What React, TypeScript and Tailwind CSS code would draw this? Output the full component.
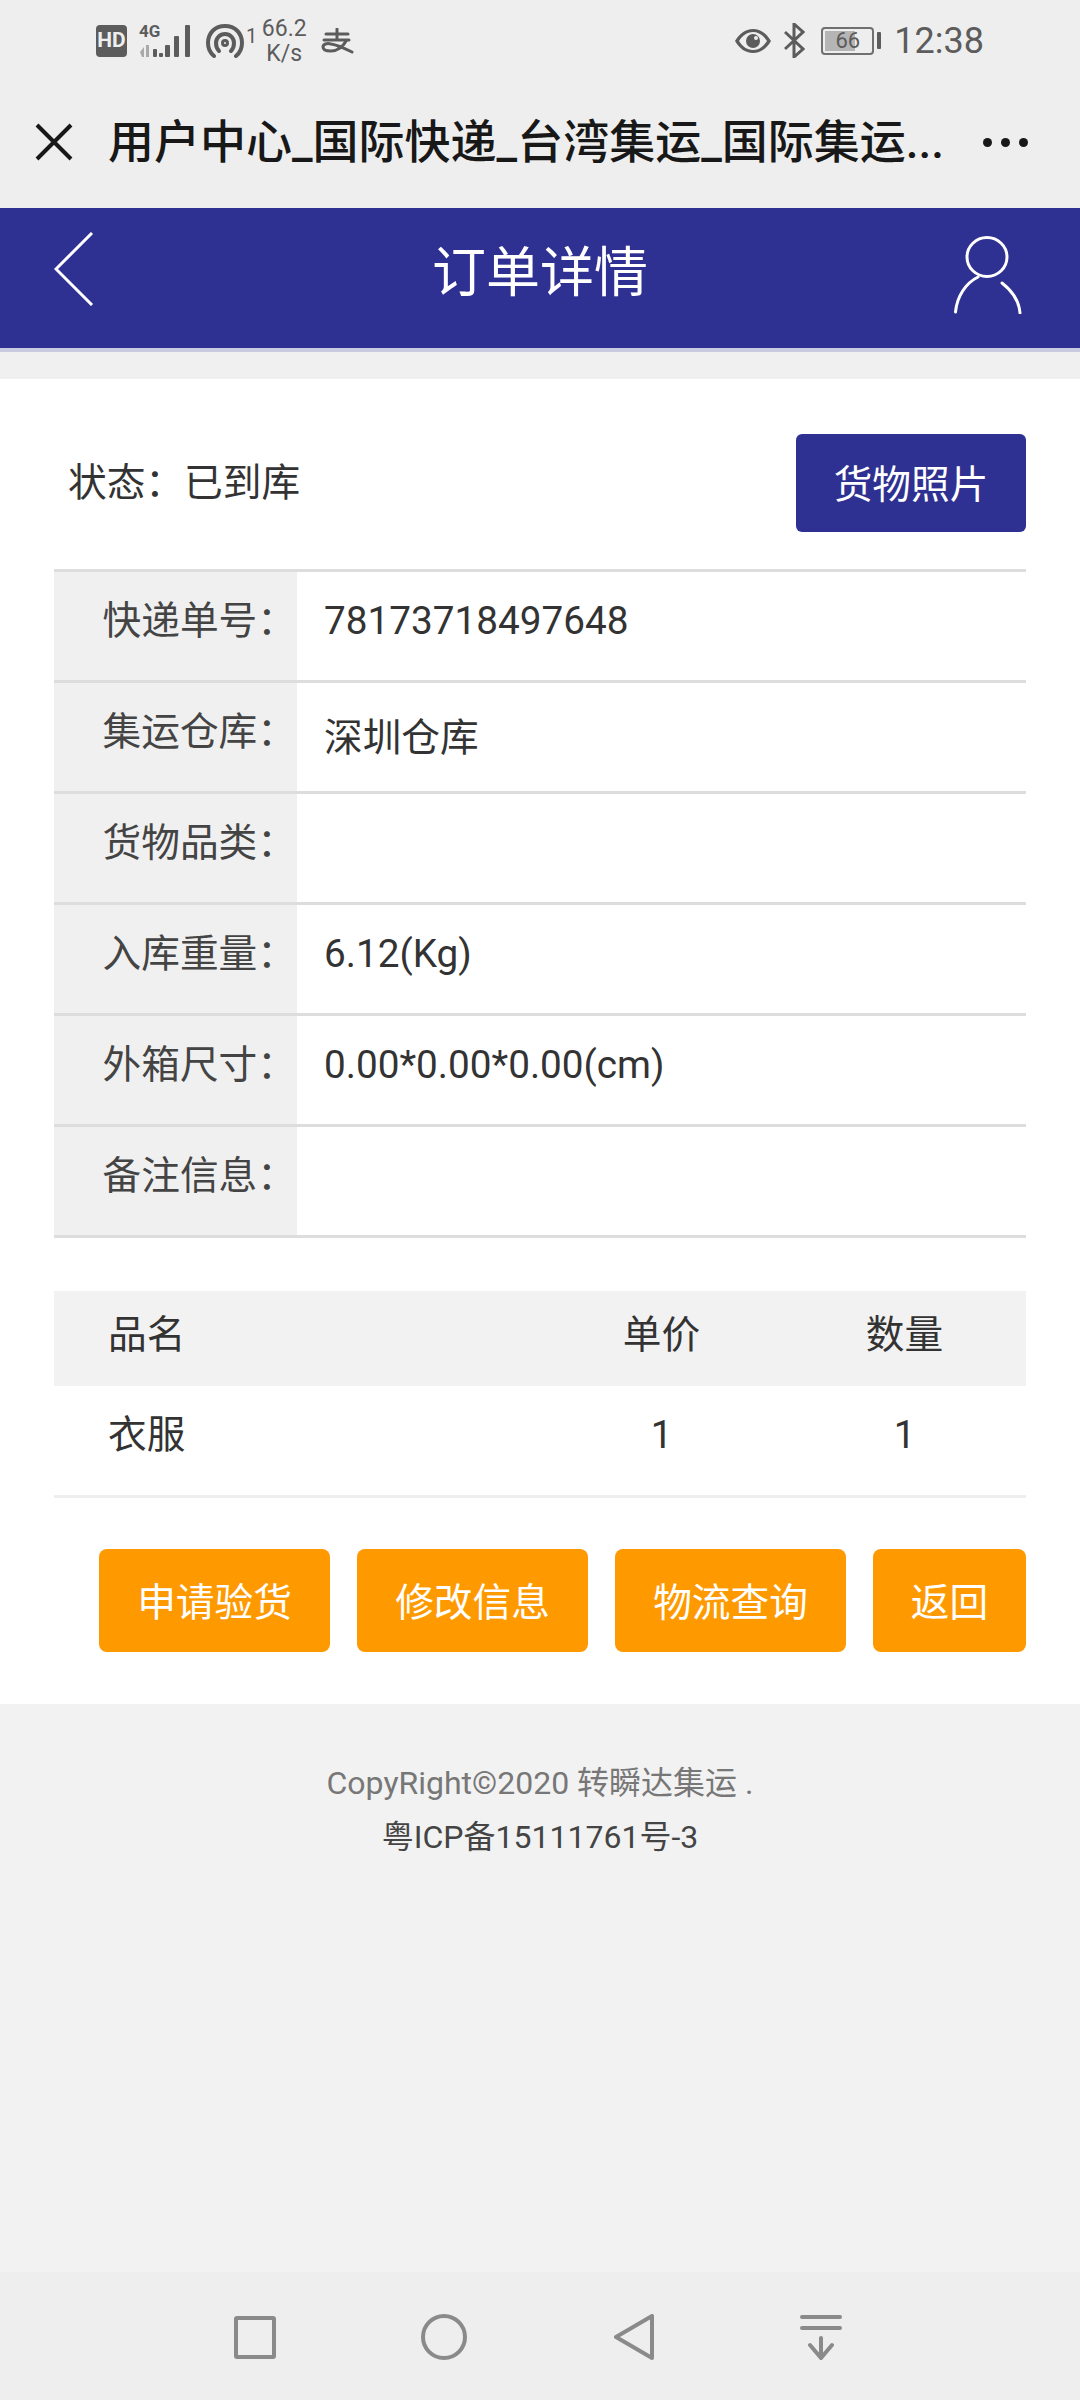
import React from 'react';

const cjk = "font-['Roboto','Noto_Sans_CJK_SC',sans-serif]";

const details = [
  { label: '快递单号：', value: '78173718497648' },
  { label: '集运仓库：', value: '深圳仓库', low: true },
  { label: '货物品类：', value: '' },
  { label: '入库重量：', value: '6.12(Kg)' },
  { label: '外箱尺寸：', value: '0.00*0.00*0.00(cm)' },
  { label: '备注信息：', value: '' },
];

const actions = [
  { text: '申请验货', width: 'w-[231px]' },
  { text: '修改信息', width: 'w-[231px]' },
  { text: '物流查询', width: 'w-[231px]' },
  { text: '返回', width: 'w-[153px]' },
];

const StatusBar = () => (
  <div className="flex h-[80px] shrink-0 items-center pl-[96px] pr-[96px] pt-[1px] text-[#5c5c5c]">
    <div className="flex h-[32px] w-[31px] items-center justify-center rounded-[4px] bg-[#5c5c5c] font-['Roboto'] text-[21px] font-bold leading-none text-[#eee]">HD</div>
    <div className="relative ml-[12px] h-[34px] w-[54px]">
      <span className="absolute left-0 top-[-1px] font-['Roboto'] text-[17px] font-bold leading-[17px]">4G</span>
      <svg viewBox="0 0 54 34" className="absolute inset-0 h-[34px] w-[54px]" fill="#5c5c5c">
        <path d="M1 28l4-5v10H3z" fill="#aaa" />
        <rect x="7" y="21" width="3" height="12" fill="#aaa" />
        <rect x="14" y="25" width="4" height="8" rx="1" />
        <rect x="20" y="29" width="4" height="4" rx="1" />
        <rect x="26" y="21" width="5" height="12" rx="1" />
        <rect x="35" y="12" width="5" height="21" rx="1" />
        <rect x="46" y="1" width="5" height="32" rx="1" />
      </svg>
    </div>
    <svg viewBox="0 0 38 34" className="ml-[13px] h-[34px] w-[38px]" fill="none" stroke="#5c5c5c" strokeWidth="4" strokeLinecap="round">
      <path d="M8 32C3 28 2 23 2 19 2 9 9 2 19 2s17 7 17 17c0 4-1 9-6 13" />
      <path d="M13 27c-2-2-3-5-3-8 0-5 4-9 9-9s9 4 9 9c0 3-1 6-3 8" />
      <circle cx="19" cy="19" r="2.5" strokeWidth="3" />
    </svg>
    <span className="mb-[10px] ml-[2px] font-['Roboto'] text-[20px] leading-none">1</span>
    <div className="ml-[3px] w-[48px] text-center font-['Roboto'] text-[23px] leading-[25px]">
      <div>66.2</div>
      <div>K/s</div>
    </div>
    {/* alipay mark */}
    <svg viewBox="0 0 34 26" className="ml-[12px] h-[26px] w-[34px]" fill="none" stroke="#5c5c5c" strokeWidth="3" strokeLinecap="round">
      <path d="M6 6h22M17 1v11M4 12h25" />
      <path d="M26 13c-3 6-9 10-15 10-5 0-8-1-8-4s4-4 8-3c7 1 15 5 21 8" />
    </svg>
    <svg viewBox="0 0 36 24" className="ml-auto h-[24px] w-[36px]" fill="#5c5c5c">
      <path fillRule="evenodd" d="M18 0C10 0 4 5 0 12c4 7 10 12 18 12s14-5 18-12C32 5 26 0 18 0zm0 21C12 21 7 17 4 12c3-5 8-9 14-9s11 4 14 9c-3 5-8 9-14 9z" />
      <circle cx="18" cy="12" r="7" />
      <circle cx="21" cy="9" r="2" fill="#eee" />
    </svg>
    <svg viewBox="0 0 21 35" className="ml-[13px] h-[35px] w-[21px]" fill="none" stroke="#5c5c5c" strokeWidth="3">
      <path d="M1 9l18 17-9 8V1l9 8L1 26" />
    </svg>
    <div className="ml-[16px] flex items-center">
      <div className="relative h-[28px] w-[53px] rounded-[4px] border-2 border-[#707070] p-[2px]">
        <div className="h-full w-[66%] bg-[#b5b5b5]" />
        <span className="absolute inset-0 text-center font-['Roboto'] text-[22px] leading-[24px]">66</span>
      </div>
      <div className="ml-[3px] h-[17px] w-[4px] rounded-[1px] bg-[#5c5c5c]" />
    </div>
    <span className="ml-[13px] font-['Roboto'] text-[36px] leading-none">12:38</span>
  </div>
);

const TitleBar = () => (
  <div className="flex h-[128px] shrink-0 items-center pb-[4px] text-[#181818]">
    <svg viewBox="0 0 38 38" className="ml-[35px] h-[38px] w-[38px] shrink-0" fill="none" stroke="currentColor" strokeWidth="4">
      <path d="M2 2l34 34M36 2L2 36" />
    </svg>
    <div className={`ml-[35px] min-w-0 flex-1 whitespace-nowrap text-[46px] font-medium leading-[64px] ${cjk}`}>
      用户中心_国际快递_台湾集运_国际集运...
    </div>
    <div className="ml-[42px] mr-[52px] flex shrink-0 gap-[9px]">
      <span className="h-[9px] w-[9px] rounded-full bg-current" />
      <span className="h-[9px] w-[9px] rounded-full bg-current" />
      <span className="h-[9px] w-[9px] rounded-full bg-current" />
    </div>
  </div>
);

const PageHeader = () => (
  <div className="grid h-[144px] shrink-0 grid-cols-[1fr_auto_1fr] items-center border-b-[4px] border-[#c9cbe1] bg-[#2e3191] text-white">
    <svg viewBox="0 0 40 74" className="mb-[18px] ml-[54px] h-[74px] w-[40px]" fill="none" stroke="#fff" strokeWidth="3">
      <path d="M38 1L2 37l36 36" />
    </svg>
    <h1 className={`mb-[8px] text-[54px] leading-none ${cjk}`}>订单详情</h1>
    <svg viewBox="0 0 68 78" className="mb-[6px] mr-[58px] h-[78px] w-[68px] justify-self-end" fill="none" stroke="#fff" strokeWidth="3" strokeLinecap="round">
      <ellipse cx="33" cy="21" rx="20" ry="19.5" />
      <path d="M24 41C12 47 3 60 1.5 76M48 47c9 7 17 17 18 30" />
    </svg>
  </div>
);

const NavBar = () => (
  <div className="flex h-[128px] shrink-0 items-center justify-between bg-[#eeeeee] pl-[234px] pr-[238px] pt-[2px]">
    <div className="h-[43px] w-[42px] rounded-[3px] border-[4px] border-[#8a8a8a]" />
    <div className="h-[46px] w-[46px] rounded-full border-[4px] border-[#8a8a8a]" />
    <svg viewBox="0 0 42 46" className="h-[46px] w-[42px]" fill="none" stroke="#8a8a8a" strokeWidth="4" strokeLinejoin="round">
      <path d="M39 2v42L3 23z" />
    </svg>
    <svg viewBox="0 0 42 46" className="h-[46px] w-[42px]" fill="none" stroke="#8a8a8a" strokeWidth="4" strokeLinecap="round">
      <path d="M2 3h38M2 14h38M21 24v20M10 31l11 13 11-13" />
    </svg>
  </div>
);

export default function App() {
  return (
    <div className={`flex h-[2400px] w-[1080px] flex-col overflow-hidden bg-[#eeeeee] ${cjk}`}>
      <StatusBar />
      <TitleBar />
      <PageHeader />

      <main className="border-t-[27px] border-[#f0f0f0] bg-white px-[54px] pb-[52px] pt-[55px] text-[38.7px] text-[#333]">
        <div className="flex items-center justify-between">
          <span className="ml-[14px]">状态：已到库</span>
          <button className="flex h-[98px] w-[230px] items-center justify-center rounded-[6px] bg-[#2e3191] pt-[4px] text-white">货物照片</button>
        </div>

        <div className="mt-[37px] border-t-[3px] border-[#dddddd]">
          {details.map((row) => (
            <div key={row.label} className="flex h-[111px] border-b-[3px] border-[#dddddd]">
              <div className="flex w-[243px] shrink-0 items-center justify-end bg-[#f0f0f0] pb-[10px] text-[#444]">
                <span className="mr-[1px]">{row.label}</span>
              </div>
              <div className={`flex items-center pl-[27px] ${row.low ? 'pt-[2px]' : 'pb-[10px]'}`}>{row.value}</div>
            </div>
          ))}
        </div>

        <div className="mt-[53px] grid grid-cols-[486px_243px_243px]">
          <div className="flex h-[95px] items-center bg-[#f2f2f2] pb-[7px] pl-[54px]">品名</div>
          <div className="flex h-[95px] items-center justify-center bg-[#f2f2f2] pb-[7px]">单价</div>
          <div className="flex h-[95px] items-center justify-center bg-[#f2f2f2] pb-[7px]">数量</div>
          <div className="flex h-[112px] items-center border-b-[3px] border-[#eeeeee] pb-[10px] pl-[54px]">衣服</div>
          <div className="flex h-[112px] items-center justify-center border-b-[3px] border-[#eeeeee] pb-[10px]">1</div>
          <div className="flex h-[112px] items-center justify-center border-b-[3px] border-[#eeeeee] pb-[10px]">1</div>
        </div>

        <div className="mt-[51px] flex justify-end gap-[27px]">
          {actions.map((a) => (
            <button key={a.text} className={`flex h-[103px] items-center justify-center rounded-[8px] bg-[#ff9900] pt-[6px] text-white ${a.width}`}>
              {a.text}
            </button>
          ))}
        </div>
      </main>

      <footer className="flex-1 bg-[#f2f2f2] pt-[52px] text-center text-[32px] leading-[54px]">
        <div className="text-[#777]">CopyRight©2020 转瞬达集运 .</div>
        <div className="text-[#444]">粤ICP备15111761号-3</div>
      </footer>

      <NavBar />
    </div>
  );
}
